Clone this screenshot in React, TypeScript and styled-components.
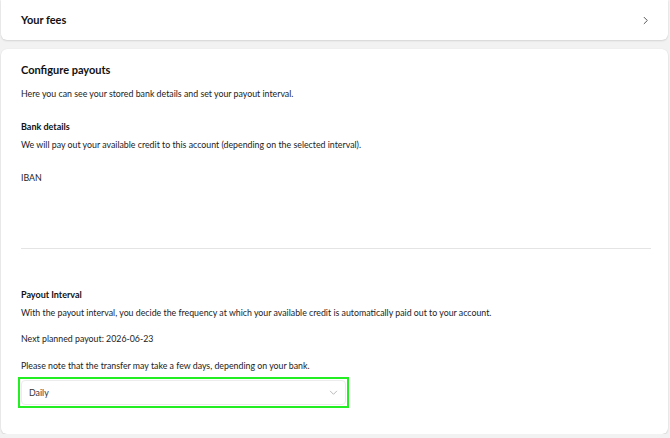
import React from "react";
import styled, { createGlobalStyle } from "styled-components";

const GlobalStyle = createGlobalStyle`
  html, body {
    margin: 0;
    padding: 0;
    background: #f2f2f2;
    font-family: Lato, "Noto Sans", sans-serif;
    color: #1c1c1e;
  }
`;

const Page = styled.div`
  display: flex;
  flex-direction: column;
  gap: 9px;
  padding: 0 2px 0 1px;
`;

const Card = styled.div`
  background: #ffffff;
  border-radius: 6px;
  box-shadow: 0 1px 2px rgba(0, 0, 0, 0.12), 0 0 1px rgba(0, 0, 0, 0.08);
`;

const FeesRow = styled(Card)`
  height: 40px;
  display: flex;
  align-items: center;
  justify-content: space-between;
  padding: 0 18px 0 20px;
  border-top-left-radius: 0;
  border-top-right-radius: 0;
`;

const CardTitle = styled.div`
  font-size: 11px;
  line-height: 14px;
  font-weight: 700;
  color: #111;
`;

const Section = styled(Card)`
  height: 385px;
  box-sizing: border-box;
  padding: 14px 17px 0 20px;
  display: flex;
  flex-direction: column;
`;

const SubTitle = styled.div`
  font-size: 9px;
  line-height: 13px;
  font-weight: 700;
  color: #111;
`;

const Text = styled.p<{ $top: number }>`
  margin: ${(p) => p.$top}px 0 0;
  font-size: 8.8px;
  line-height: 13px;
  color: #222;
`;

const Heading = styled(SubTitle)<{ $top: number }>`
  margin-top: ${(p) => p.$top}px;
`;

const Divider = styled.hr`
  margin: 64px 0 0;
  border: none;
  border-top: 1px solid #e4e4e4;
`;

const FocusRing = styled.div`
  margin: 5px 0 0 -3px;
  align-self: flex-start;
  border: 2px solid #22ee22;
  padding: 1px;
`;

const Select = styled.div`
  width: 325px;
  height: 25px;
  box-sizing: border-box;
  border: 1px solid #ececec;
  border-radius: 4px;
  display: flex;
  align-items: center;
  justify-content: space-between;
  padding: 0 7px 0 7px;
  font-size: 8.8px;
  color: #333;
`;

const Chevron = ({ dir, color, size }: { dir: "right" | "down"; color: string; size: number }) => (
  <svg width={size} height={size} viewBox="0 0 10 10" fill="none">
    {dir === "right" ? (
      <path d="M3.5 1.5 L7 5 L3.5 8.5" stroke={color} strokeWidth="1.1" strokeLinecap="round" strokeLinejoin="round" />
    ) : (
      <path d="M1.5 3.5 L5 7 L8.5 3.5" stroke={color} strokeWidth="0.9" strokeLinecap="round" strokeLinejoin="round" />
    )}
  </svg>
);

export default function App() {
  return (
    <>
      <GlobalStyle />
      <Page>
        <FeesRow>
          <CardTitle>Your fees</CardTitle>
          <Chevron dir="right" color="#555" size={9} />
        </FeesRow>
        <Section>
          <CardTitle>Configure payouts</CardTitle>
          <Text $top={10}>Here you can see your stored bank details and set your payout interval.</Text>
          <Heading $top={20}>Bank details</Heading>
          <Text $top={5}>We will pay out your available credit to this account (depending on the selected interval).</Text>
          <Text $top={20}>IBAN</Text>
          <Divider />
          <Heading $top={39}>Payout Interval</Heading>
          <Text $top={5}>
            With the payout interval, you decide the frequency at which your available credit is automatically paid out to your account.
          </Text>
          <Text $top={13}>Next planned payout: 2026-06-23</Text>
          <Text $top={14}>Please note that the transfer may take a few days, depending on your bank.</Text>
          <FocusRing>
            <Select>
              <span>Daily</span>
              <Chevron dir="down" color="#aaa" size={9} />
            </Select>
          </FocusRing>
        </Section>
      </Page>
    </>
  );
}
